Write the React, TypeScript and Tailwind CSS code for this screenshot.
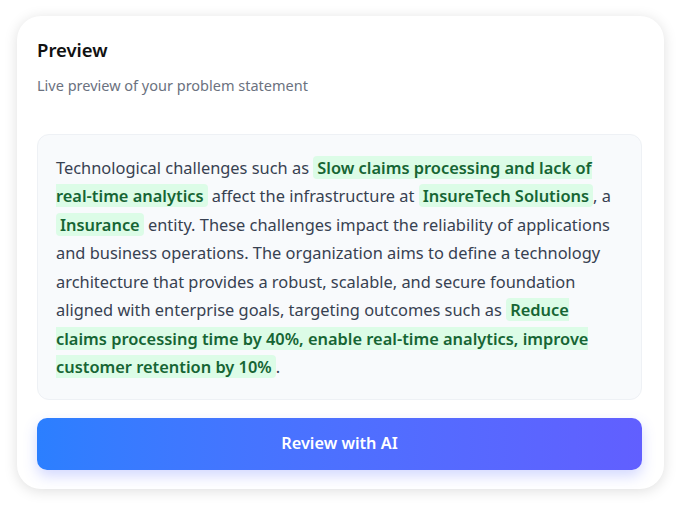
import React from "react";

const Hl = ({ children }: { children: React.ReactNode }) => (
  <span className="bg-[#dcfce7] text-[#166534] font-semibold rounded-[4px] px-[4px]">
    {children}
  </span>
);

export default function App() {
  return (
    <div className="min-h-[506px] bg-white pt-4 pl-[17px]" style={{ fontFamily: '"Noto Sans", "Open Sans", sans-serif' }}>
      <div className="w-[647px] rounded-3xl bg-white shadow-[0_2px_14px_rgba(0,0,0,0.13)] pl-5 pr-[22px] pt-[21px] pb-[19px]">
        <h2 className="text-[18.5px] font-semibold text-[#111] leading-[26px]">Preview</h2>
        <p className="mt-[12px] text-[14.5px] text-[#6b7280] leading-[20px]">Live preview of your problem statement</p>
        <div className="mt-[39px] rounded-xl bg-[#f8fafc] border border-[#eef1f5] pl-[18px] pr-[24px] pt-[19px] pb-[17px]">
          <p className="text-[16.4px] leading-[28.45px] text-[#374151]">
            Technological challenges such as <Hl>Slow claims processing and lack of real-time analytics</Hl> affect the infrastructure at <Hl>InsureTech Solutions</Hl>, a <Hl>Insurance</Hl> entity. These challenges impact the reliability of applications and business operations. The organization aims to define a technology architecture that provides a robust, scalable, and secure foundation aligned with enterprise goals, targeting outcomes such as <Hl>Reduce claims processing time by 40%, enable real-time analytics, improve customer retention by 10%</Hl>.
          </p>
        </div>
        <button className="mt-[18px] w-full h-[52px] rounded-[10px] bg-gradient-to-r from-[#2b7fff] to-[#615fff] text-white font-semibold text-[16.3px] shadow-[0_6px_14px_rgba(80,100,255,0.25)]">
          Review with AI
        </button>
      </div>
    </div>
  );
}
